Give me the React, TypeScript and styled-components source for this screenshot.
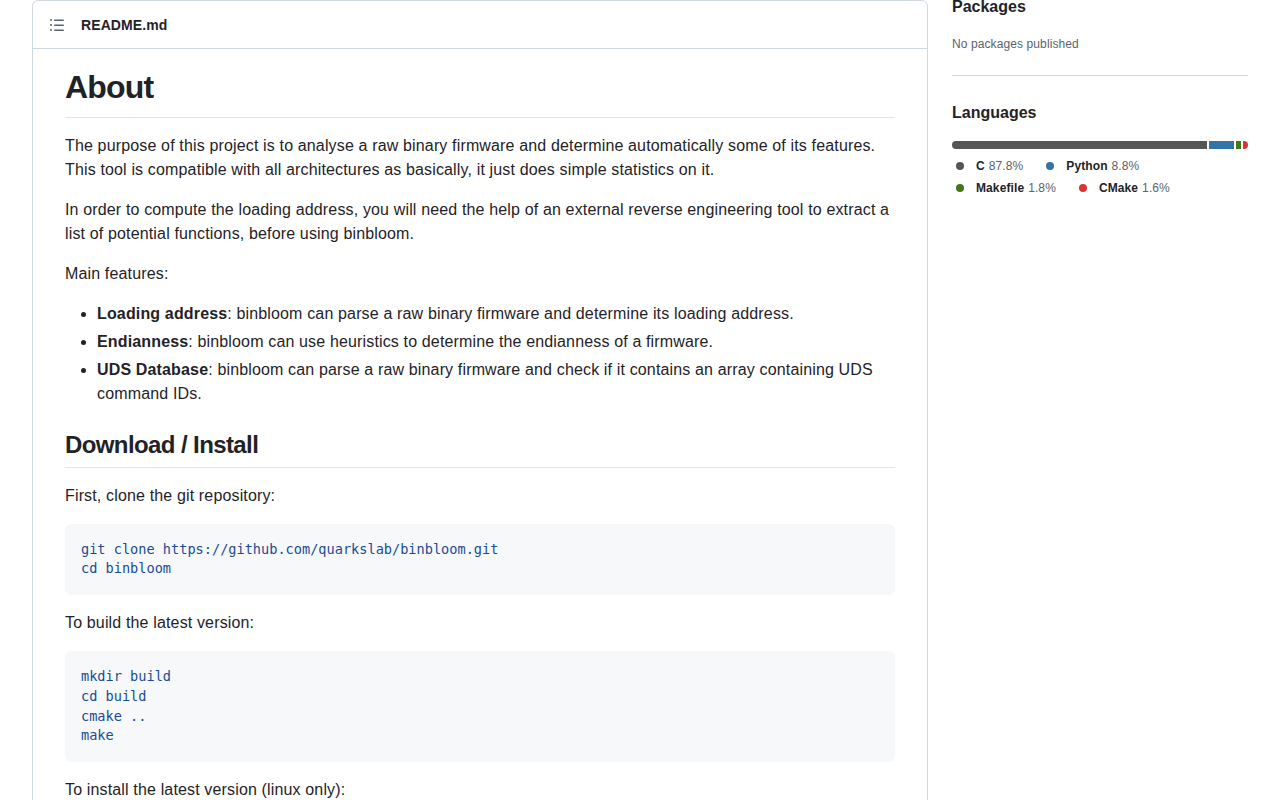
import React from "react";
import styled, { createGlobalStyle } from "styled-components";

const GlobalStyle = createGlobalStyle`
  html, body { margin: 0; padding: 0; background: #ffffff; }
  body {
    font-family: "Liberation Sans", Arial, sans-serif;
    color: #1f2328;
    -webkit-font-smoothing: antialiased;
  }
  * { box-sizing: border-box; }
`;

const Page = styled.div`
  display: flex;
  align-items: flex-start;
  gap: 24px;
  padding: 0 32px;
  width: 1280px;
  height: 800px;
  overflow: hidden;
`;

const ReadmeBox = styled.div`
  width: 896px;
  flex: none;
  border: 1px solid #d1d9e0;
  border-radius: 6px;
`;

const ReadmeHeader = styled.div`
  height: 48px;
  display: flex;
  align-items: center;
  gap: 16px;
  padding: 0 16px;
  border-bottom: 1px solid #d1d9e0;
`;

const IconWrap = styled.span`
  display: inline-flex;
  width: 16px;
  height: 16px;
  color: #59636e;
  flex: none;
`;

const FileName = styled.span`
  font-size: 14px;
  font-weight: 700;
  color: #1f2328;
  letter-spacing: 0.1px;
`;

const Article = styled.article`
  padding: 18px 32px 32px;
  font-size: 16px;
  line-height: 1.5;
  color: #1f2328;
  letter-spacing: 0.15px;
`;

const H1 = styled.h1`
  margin: 0 0 16px;
  font-size: 32px;
  line-height: 1.25;
  font-weight: 700;
  letter-spacing: -0.8px;
  padding-bottom: 0.3em;
  border-bottom: 1px solid #dfe4ea;
`;

const H2 = styled.h2`
  margin: 24px 0 16px;
  font-size: 24px;
  line-height: 1.25;
  font-weight: 700;
  letter-spacing: -0.6px;
  padding-bottom: 0.3em;
  border-bottom: 1px solid #dfe4ea;
`;

const P = styled.p`
  margin: 0 0 16px;
`;

const List = styled.ul`
  margin: 0 0 16px;
  padding-left: 2em;
  list-style: disc;
`;

const Item = styled.li`
  & + & { margin-top: 4px; }
`;

const Pre = styled.pre`
  margin: 0 0 16px;
  padding: 16px;
  background: #f6f8fa;
  border-radius: 6px;
  font-family: "DejaVu Sans Mono", "Liberation Mono", monospace;
  font-size: 13.6px;
  line-height: 1.45;
  letter-spacing: 0;
  color: #1a4c95;
  overflow: hidden;
`;

const Sidebar = styled.aside`
  width: 296px;
  flex: none;
  margin-top: -5px;
`;

const Section = styled.section<{ $divider?: boolean }>`
  padding: ${(p) => (p.$divider ? "0 0 22px" : "25px 0")};
  border-bottom: ${(p) => (p.$divider ? "1px solid #d1d9e0" : "none")};
`;

const SideTitle = styled.h2`
  margin: 0 0 16px;
  font-size: 16px;
  line-height: 1.5;
  font-weight: 700;
  color: #1f2328;
`;

const Muted = styled.div`
  font-size: 12px;
  line-height: 18px;
  color: #59636e;
  letter-spacing: 0.1px;
`;

const Bar = styled.div`
  display: flex;
  gap: 2px;
  height: 8px;
  border-radius: 6px;
  overflow: hidden;
  margin-bottom: 8px;
`;

const Segment = styled.span<{ $color: string }>`
  display: block;
  height: 100%;
  background: ${(p) => p.$color};
  flex: none;
`;

const Legend = styled.ul`
  display: flex;
  flex-wrap: wrap;
  row-gap: 4px;
  margin: 0;
  padding: 0;
  list-style: none;
`;

const LegendItem = styled.li`
  display: inline-flex;
  align-items: center;
  margin-right: 19px;
  font-size: 12px;
  line-height: 18px;
  letter-spacing: 0.1px;
`;

const Dot = styled.svg<{ $color: string }>`
  width: 16px;
  height: 16px;
  margin-right: 8px;
  fill: ${(p) => p.$color};
`;

const LangName = styled.span`
  font-weight: 700;
  color: #1f2328;
  margin-right: 4px;
`;

const LangPct = styled.span`
  color: #59636e;
`;

const ListIcon = () => (
  <svg viewBox="0 0 16 16" width="16" height="16" fill="currentColor">
    <path d="M5.75 2.5h8.5a.75.75 0 0 1 0 1.5h-8.5a.75.75 0 0 1 0-1.5Zm0 5h8.5a.75.75 0 0 1 0 1.5h-8.5a.75.75 0 0 1 0-1.5Zm0 5h8.5a.75.75 0 0 1 0 1.5h-8.5a.75.75 0 0 1 0-1.5ZM2 14a1 1 0 1 1 0-2 1 1 0 0 1 0 2Zm1-6a1 1 0 1 1-2 0 1 1 0 0 1 2 0ZM2 4a1 1 0 1 1 0-2 1 1 0 0 1 0 2Z" />
  </svg>
);

const languages = [
  { name: "C", pct: 87.8, color: "#555555" },
  { name: "Python", pct: 8.8, color: "#3572A5" },
  { name: "Makefile", pct: 1.8, color: "#427819" },
  { name: "CMake", pct: 1.6, color: "#DA3434" },
];

export default function App() {
  return (
    <>
      <GlobalStyle />
      <Page>
        <ReadmeBox>
          <ReadmeHeader>
            <IconWrap>
              <ListIcon />
            </IconWrap>
            <FileName>README.md</FileName>
          </ReadmeHeader>
          <Article>
            <H1>About</H1>
            <P>
              The purpose of this project is to analyse a raw binary firmware and determine automatically some of its features.
              This tool is compatible with all architectures as basically, it just does simple statistics on it.
            </P>
            <P>
              In order to compute the loading address, you will need the help of an external reverse engineering tool to extract a
              list of potential functions, before using binbloom.
            </P>
            <P>Main features:</P>
            <List>
              <Item>
                <strong>Loading address</strong>: binbloom can parse a raw binary firmware and determine its loading address.
              </Item>
              <Item>
                <strong>Endianness</strong>: binbloom can use heuristics to determine the endianness of a firmware.
              </Item>
              <Item>
                <strong>UDS Database</strong>: binbloom can parse a raw binary firmware and check if it contains an array containing UDS
                command IDs.
              </Item>
            </List>
            <H2>Download / Install</H2>
            <P>First, clone the git repository:</P>
            <Pre>{`git clone https://github.com/quarkslab/binbloom.git
cd binbloom`}</Pre>
            <P>To build the latest version:</P>
            <Pre>{`mkdir build
cd build
cmake ..
make`}</Pre>
            <P>To install the latest version (linux only):</P>
          </Article>
        </ReadmeBox>
        <Sidebar>
          <Section $divider>
            <SideTitle>Packages</SideTitle>
            <Muted>No packages published</Muted>
          </Section>
          <Section>
            <SideTitle>Languages</SideTitle>
            <Bar>
              {languages.map((l) => (
                <Segment key={l.name} $color={l.color} style={{ width: `${(l.pct / 100) * 290}px` }} />
              ))}
            </Bar>
            <Legend>
              {languages.map((l) => (
                <LegendItem key={l.name}>
                  <Dot $color={l.color} viewBox="0 0 16 16">
                    <circle cx="8" cy="8" r="4" />
                  </Dot>
                  <LangName>{l.name}</LangName>
                  <LangPct>{l.pct}%</LangPct>
                </LegendItem>
              ))}
            </Legend>
          </Section>
        </Sidebar>
      </Page>
    </>
  );
}
